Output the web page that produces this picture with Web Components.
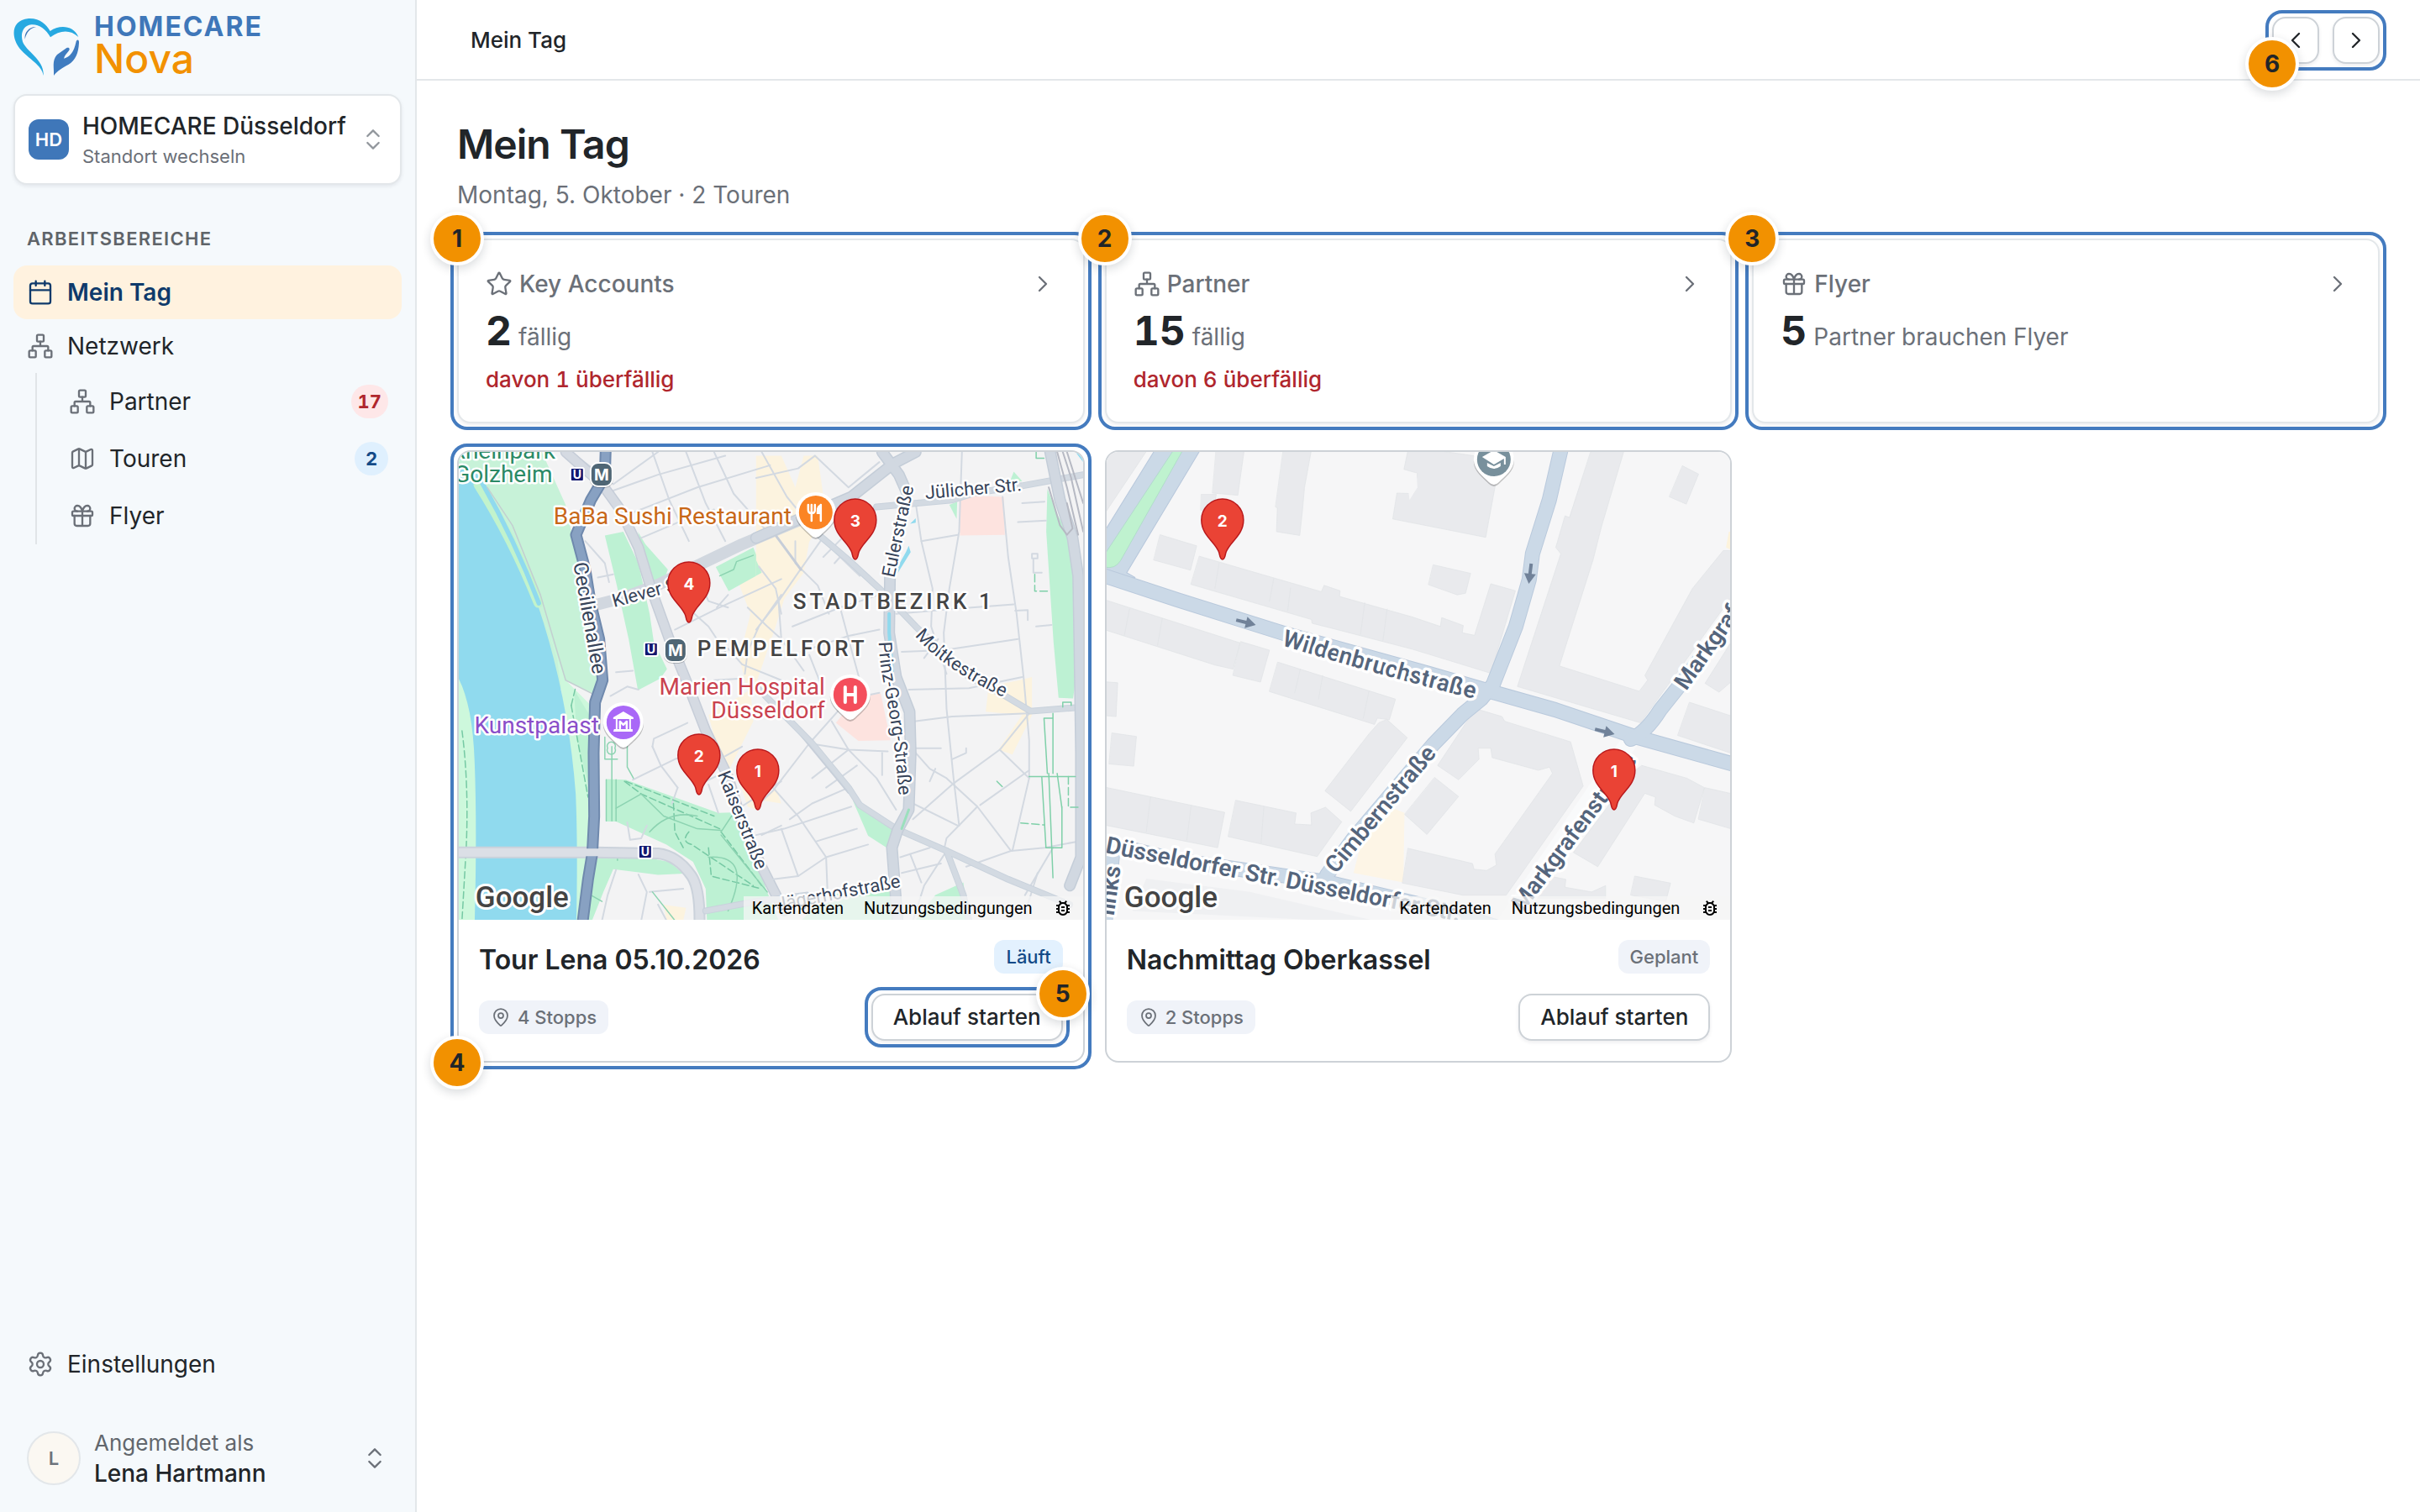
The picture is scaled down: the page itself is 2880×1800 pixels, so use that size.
<!DOCTYPE html>
<html lang="de">
<head>
<meta charset="utf-8">
<meta name="viewport" content="width=device-width, initial-scale=1">
<title>Mein Tag – HOMECARE Nova</title>
<style>
  :root {
    --ink: #212529;
    --muted: #6b7078;
    --line: #e3e7ea;
    --line-strong: #cdd2d7;
    --brand: #3f77b9;
    --ring: #447bbf;
    --accent: #f29100;
    --navy: #0f3a6b;
    --danger: #b0262d;
    --shadow: 0 2px 4px rgba(20, 30, 45, .08);
  }
  body { margin: 0; background: #fff; color: var(--ink); font: 400 28px/40px Inter, "Liberation Sans", sans-serif; }
</style>
</head>
<body>
<app-shell>
  <app-sidebar slot="sidebar">
    <location-switcher slot="top" initials="HD" name="HOMECARE Düsseldorf">Standort wechseln</location-switcher>
    <nav-item icon="calendar" active>Mein Tag</nav-item>
    <nav-item icon="network">Netzwerk</nav-item>
    <nav-group>
      <nav-item icon="network">Partner<count-badge slot="end" tone="red">17</count-badge></nav-item>
      <nav-item icon="map">Touren<count-badge slot="end" tone="blue">2</count-badge></nav-item>
      <nav-item icon="gift">Flyer</nav-item>
    </nav-group>
    <nav-item slot="bottom" icon="settings">Einstellungen</nav-item>
    <user-menu slot="bottom" initial="L" name="Lena Hartmann">Angemeldet als</user-menu>
  </app-sidebar>

  <top-bar slot="header" label="Mein Tag">
    <callout-ring number="6" corner="bottom-left"><day-pager></day-pager></callout-ring>
  </top-bar>

  <page-title heading="Mein Tag">Montag, 5. Oktober · 2 Touren</page-title>

  <card-grid>
    <callout-ring number="1"><stat-card icon="star" label="Key Accounts" value="2" unit="fällig">davon 1 überfällig</stat-card></callout-ring>
    <callout-ring number="2"><stat-card icon="network" label="Partner" value="15" unit="fällig">davon 6 überfällig</stat-card></callout-ring>
    <callout-ring number="3"><stat-card icon="gift" label="Flyer" value="5" unit="Partner brauchen Flyer"></stat-card></callout-ring>
  </card-grid>

  <card-grid>
    <callout-ring number="4" corner="bottom-left">
      <tour-card name="Tour Lena 05.10.2026" stops="4 Stopps">
        <pempelfort-map slot="map"></pempelfort-map>
        <state-chip slot="state" tone="blue">Läuft</state-chip>
        <callout-ring slot="action" number="5" corner="top-right"><plain-button>Ablauf starten</plain-button></callout-ring>
      </tour-card>
    </callout-ring>
    <tour-card name="Nachmittag Oberkassel" stops="2 Stopps">
      <oberkassel-map slot="map"></oberkassel-map>
      <state-chip slot="state">Geplant</state-chip>
      <plain-button slot="action">Ablauf starten</plain-button>
    </tour-card>
  </card-grid>
</app-shell>

<script>
const define = (name, render) => customElements.define(name, class extends HTMLElement {
  constructor() { super(); this.attachShadow({ mode: 'open' }); }
  connectedCallback() {
    const t = document.createElement('template');
    t.innerHTML = '<style>:host, * { box-sizing: border-box; }</style>' + render(a => this.getAttribute(a) || '', this);
    this.shadowRoot.replaceChildren(t.content.cloneNode(true));
  }
});

/* ---------- icons (24 unit grid) ---------- */
const ICONS = {
  calendar: '<path d="M8 2v4M16 2v4M3 10h18"/><rect x="3" y="4" width="18" height="18" rx="2"/>',
  network: '<rect x="16" y="16" width="6" height="6" rx="1"/><rect x="2" y="16" width="6" height="6" rx="1"/><rect x="9" y="2" width="6" height="6" rx="1"/><path d="M5 16v-3a1 1 0 0 1 1-1h12a1 1 0 0 1 1 1v3M12 12V8"/>',
  map: '<path d="M14.106 5.553a2 2 0 0 0 1.788 0l3.659-1.83A1 1 0 0 1 21 4.619v12.764a1 1 0 0 1-.553.894l-4.553 2.277a2 2 0 0 1-1.788 0l-4.212-2.106a2 2 0 0 0-1.788 0l-3.659 1.83A1 1 0 0 1 3 19.381V6.618a1 1 0 0 1 .553-.894l4.553-2.277a2 2 0 0 1 1.788 0zM15 5.764v15M9 3.236v15"/>',
  gift: '<rect x="3" y="8" width="18" height="4" rx="1"/><path d="M12 8v13M19 12v7a2 2 0 0 1-2 2H7a2 2 0 0 1-2-2v-7M7.5 8a2.5 2.5 0 0 1 0-5A4.8 8 0 0 1 12 8a4.8 8 0 0 1 4.5-5 2.5 2.5 0 0 1 0 5"/>',
  settings: '<path d="M9.671 4.136a2.34 2.34 0 0 1 4.659 0 2.34 2.34 0 0 0 3.319 1.915 2.34 2.34 0 0 1 2.33 4.033 2.34 2.34 0 0 0 0 3.831 2.34 2.34 0 0 1-2.33 4.033 2.34 2.34 0 0 0-3.319 1.915 2.34 2.34 0 0 1-4.659 0 2.34 2.34 0 0 0-3.32-1.915 2.34 2.34 0 0 1-2.33-4.033 2.34 2.34 0 0 0 0-3.831A2.34 2.34 0 0 1 6.35 6.051a2.34 2.34 0 0 0 3.319-1.915"/><circle cx="12" cy="12" r="3"/>',
  star: '<path d="M11.525 2.295a.53.53 0 0 1 .95 0l2.31 4.679a2.123 2.123 0 0 0 1.595 1.16l5.166.756a.53.53 0 0 1 .294.904l-3.736 3.638a2.123 2.123 0 0 0-.611 1.878l.882 5.14a.53.53 0 0 1-.771.56l-4.618-2.428a2.122 2.122 0 0 0-1.973 0L6.396 21.01a.53.53 0 0 1-.77-.56l.881-5.139a2.122 2.122 0 0 0-.611-1.879L2.16 9.795a.53.53 0 0 1 .294-.906l5.165-.755a2.122 2.122 0 0 0 1.597-1.16z"/>',
  right: '<path d="m9 18 6-6-6-6"/>',
  left: '<path d="m15 18-6-6 6-6"/>',
  updown: '<path d="m7 15 5 5 5-5M7 9l5-5 5 5"/>',
  pin: '<path d="M20 10c0 4.993-5.539 10.193-7.399 11.799a1 1 0 0 1-1.202 0C9.539 20.193 4 14.993 4 10a8 8 0 0 1 16 0"/><circle cx="12" cy="10" r="3"/>'
};
define('app-icon', a => `<style>
  :host { display: block; flex: none; width: var(--icon, 32px); height: var(--icon, 32px); }
  svg { display: block; width: 100%; height: 100%; fill: none; stroke: currentColor; stroke-width: var(--stroke, 1.75); stroke-linecap: round; stroke-linejoin: round; }
</style><svg viewBox="0 0 24 24" aria-hidden="true">${ICONS[a('name')]}</svg>`);

/* ---------- shell ---------- */
define('app-shell', () => `<style>
  :host { display: grid; grid-template-columns: 496px minmax(0, 1fr); min-height: 100vh; }
  .side { display: grid; background: #f5f9fc; border-right: 2px solid var(--line); }
  .body { display: flex; flex-direction: column; min-width: 0; }
  main { display: flex; flex-direction: column; gap: 32px; padding: 48px; }
</style>
<div class="side"><slot name="sidebar"></slot></div>
<div class="body"><slot name="header"></slot><main><slot></slot></main></div>`);

define('app-sidebar', () => `<style>
  :host { display: flex; flex-direction: column; padding: 16px 16px 28px; }
  .brand { display: flex; gap: 16px; height: 76px; margin-bottom: 20px; text-decoration: none; }
  .brand svg { width: 80px; height: 76px; flex: none; }
  .brand b { display: block; font-size: 32px; line-height: 32px; letter-spacing: 2px; color: var(--brand); font-weight: 700; }
  .brand i { display: block; font-size: 48px; line-height: 44px; font-style: normal; font-weight: 500; color: var(--accent); }
  h2 { margin: 48px 0 16px; padding: 0 16px; font-size: 22px; line-height: 32px; font-weight: 600; letter-spacing: .06em; color: #5f6469; }
  .foot { margin-top: auto; display: flex; flex-direction: column; gap: 44px; }
</style>
<a class="brand" href="#start">
  <svg viewBox="48 48 240 228" aria-hidden="true">
    <path fill="#27a9e1" d="M155 270C150 232 103 212 71 174C39 134 38 72 102 66C142 64 166 88 179 111C212 88 262 90 280 132C250 103 212 108 180 133C164 103 138 86 112 88C82 91 72 120 81 149C93 183 160 214 155 270Z"/>
    <path fill="#3f77b9" d="M89 140C86 116 104 95 129 96C108 100 94 116 89 140Z"/>
    <path fill="#3f7cc0" d="M192 270C194 243 184 217 204 195L237 172C246 167 252 175 245 182C238 191 230 198 228 209C250 203 264 184 271 152C273 139 283 140 282 153C280 190 270 215 245 230C222 243 206 251 192 270Z"/>
  </svg>
  <span><b>HOMECARE</b><i>Nova</i></span>
</a>
<slot name="top"></slot>
<nav><h2>ARBEITSBEREICHE</h2><slot></slot></nav>
<div class="foot"><slot name="bottom"></slot></div>`);

define('location-switcher', a => `<style>
  :host { display: block; }
  button { display: flex; align-items: center; gap: 16px; width: 100%; padding: 16px; border: 2px solid var(--line); border-radius: 16px; background: #fff; box-shadow: var(--shadow); font: inherit; color: var(--ink); text-align: left; }
  .tile { display: grid; place-items: center; width: 48px; height: 48px; border-radius: 12px; background: var(--brand); color: #fff; font-size: 22px; font-weight: 600; }
  .text { flex: 1; min-width: 0; white-space: nowrap; }
  strong { display: block; font-weight: 500; }
  small { display: block; font-size: 22px; line-height: 32px; color: var(--muted); }
  app-icon { color: #92979d; }
</style>
<button type="button"><span class="tile">${a('initials')}</span><span class="text"><strong>${a('name')}</strong><small><slot></slot></small></span><app-icon name="updown"></app-icon></button>`);

define('nav-item', (a, el) => `<style>
  :host { display: block; }
  a { display: flex; align-items: center; gap: 16px; height: var(--row, 64px); padding: 0 16px; border-radius: 16px; color: var(--ink); text-decoration: none; }
  app-icon { color: var(--muted); }
  span { flex: 1; }
  :host([active]) a { background: #fff2df; color: var(--navy); font-weight: 600; }
  :host([active]) app-icon { color: var(--navy); }
</style>
<a href="#" ${el.hasAttribute('active') ? 'aria-current="page"' : ''}><app-icon name="${a('icon')}"></app-icon><span><slot></slot></span><slot name="end"></slot></a>`);

define('nav-group', () => `<style>
  :host { display: block; --row: 68px; margin-left: 26px; padding-left: 22px; border-left: 2px solid #e1e5e8; }
</style><slot></slot>`);

define('count-badge', () => `<style>
  :host { display: grid; place-items: center; min-width: 40px; height: 40px; padding: 0 8px; border-radius: 20px; font-size: 22px; font-weight: 700; font-variant-numeric: tabular-nums; background: #dff0fe; color: #134a87; }
  :host([tone="red"]) { background: #fee7e8; color: var(--danger); }
</style><slot></slot>`);

define('user-menu', a => `<style>
  :host { display: block; }
  button { display: flex; align-items: center; gap: 16px; width: 100%; padding: 0 16px; border: 0; background: none; font: inherit; line-height: 36px; color: var(--ink); text-align: left; }
  .avatar { display: grid; place-items: center; width: 64px; height: 64px; border: 2px solid var(--line); border-radius: 50%; background: #fbf8f2; color: #6d747d; font-size: 22px; font-weight: 600; }
  .text { flex: 1; }
  small { display: block; font-size: 26px; color: #62676d; }
  strong { display: block; font-weight: 500; }
  app-icon { color: var(--muted); }
</style>
<button type="button"><span class="avatar">${a('initial')}</span><span class="text"><small><slot></slot></small><strong>${a('name')}</strong></span><app-icon name="updown"></app-icon></button>`);

define('top-bar', a => `<style>
  :host { display: flex; align-items: center; justify-content: space-between; height: 96px; padding: 2px 48px 0 64px; border-bottom: 2px solid var(--line); position: relative; z-index: 2; }
  span { font-size: 26px; font-weight: 500; }
</style><span>${a('label')}</span><slot></slot>`);

define('day-pager', () => `<style>
  :host { display: flex; gap: 16px; }
  button { display: grid; place-items: center; width: 56px; height: 56px; padding: 0; border: 2px solid var(--line-strong); border-radius: 16px; background: #fff; box-shadow: var(--shadow); color: var(--ink); }
</style>
<button type="button" aria-label="Vorheriger Tag"><app-icon name="left"></app-icon></button>
<button type="button" aria-label="Nächster Tag"><app-icon name="right"></app-icon></button>`);

/* numbered highlight drawn round whatever is slotted in */
define('callout-ring', a => `<style>
  :host { display: grid; position: relative; }
  .ring { position: absolute; inset: -8px; border: 4px solid var(--ring); border-radius: 20px; pointer-events: none; }
  .num { position: absolute; z-index: 1; top: 0; left: 0; translate: -50% -50%; display: grid; place-items: center; width: 64px; height: 64px; border: 4px solid #fff; border-radius: 50%; background: var(--accent); box-shadow: 0 4px 12px rgba(20, 30, 45, .16); font-size: 28px; font-weight: 700; color: var(--ink); }
  :host([corner="bottom-left"]) .num { top: 100%; }
  :host([corner="top-right"]) .num { left: 100%; }
</style><slot></slot><div class="ring"></div><div class="num">${a('number')}</div>`);

/* ---------- page ---------- */
define('page-title', a => `<style>
  :host { display: block; }
  h1 { margin: 0 0 12px; font-size: 48px; line-height: 56px; font-weight: 600; letter-spacing: -.02em; }
  p { margin: 0; color: var(--muted); }
</style><h1>${a('heading')}</h1><p><slot></slot></p>`);

define('card-grid', () => `<style>
  :host { display: grid; grid-template-columns: repeat(3, minmax(0, 1fr)); gap: 24px; }
</style><slot></slot>`);

define('stat-card', a => `<style>
  :host { display: grid; }
  a { display: block; min-height: 220px; padding: 32px; border: 2px solid var(--line); border-radius: 16px; background: #fff; box-shadow: var(--shadow); color: var(--muted); text-decoration: none; font-variant-numeric: tabular-nums; }
  .top { display: flex; align-items: center; gap: 8px; margin-bottom: 4px; font-weight: 500; }
  .top span { flex: 1; }
  .count { display: flex; align-items: baseline; gap: 8px; margin-bottom: 8px; }
  b { font-size: 48px; line-height: 64px; font-weight: 700; color: var(--ink); }
  .late { font-size: 26px; line-height: 36px; font-weight: 500; color: var(--danger); }
</style>
<a href="#"><div class="top"><app-icon name="${a('icon')}"></app-icon><span>${a('label')}</span><app-icon name="right"></app-icon></div>
<div class="count"><b>${a('value')}</b><span>${a('unit')}</span></div><div class="late"><slot></slot></div></a>`);

define('plain-button', () => `<style>
  :host { display: block; }
  button { display: block; height: 56px; padding: 0 24px; border: 2px solid var(--line-strong); border-radius: 16px; background: #fff; box-shadow: var(--shadow); font: inherit; font-size: 26px; font-weight: 500; color: var(--ink); white-space: nowrap; }
</style><button type="button"><slot></slot></button>`);

define('state-chip', () => `<style>
  :host { display: flex; align-items: center; gap: 8px; height: 40px; padding: 0 14px; border-radius: 12px; font-size: 22px; font-weight: 500; background: #f0f3f9; color: var(--muted); --icon: 24px; white-space: nowrap; }
  :host([tone="blue"]) { background: #e3f1fe; color: #134a87; }
</style><slot></slot>`);

define('tour-card', a => `<style>
  :host { display: block; border: 2px solid var(--line-strong); border-radius: 16px; background: #fff; }
  .map { position: relative; overflow: hidden; border-radius: 14px 14px 0 0; }
  .body { display: flex; flex-direction: column; gap: 16px; padding: 24px; }
  .row { display: flex; justify-content: space-between; align-items: center; }
  .head { align-items: flex-start; }
  h3 { margin: 0; font-size: 32px; line-height: 48px; font-weight: 600; }
</style>
<div class="map"><slot name="map"></slot></div>
<div class="body">
  <div class="row head"><h3>${a('name')}</h3><slot name="state"></slot></div>
  <div class="row"><state-chip><app-icon name="pin"></app-icon>${a('stops')}</state-chip><slot name="action"></slot></div>
</div>`);

/* ---------- maps ---------- */
define('map-frame', () => `<style>
  :host { display: block; position: relative; aspect-ratio: 4 / 3; overflow: hidden; }
  .bar { position: absolute; right: 0; bottom: 0; display: flex; align-items: center; height: 28px; padding: 0 12px 0 10px; gap: 24px; background: rgba(245, 245, 245, .75); font: 400 20px/28px Roboto, sans-serif; color: #000; }
  button, a { padding: 0; border: 0; background: none; font: inherit; color: #000; text-decoration: none; }
  svg { display: block; width: 24px; height: 24px; }
</style>
<slot></slot>
<div class="bar"><button type="button">Kartendaten</button><a href="#">Nutzungsbedingungen</a><a href="#" aria-label="Fehler melden"><svg viewBox="0 0 24 24"><path d="M20 8h-2.81c-.45-.78-1.07-1.45-1.82-1.96L17 4.41 15.59 3l-2.17 2.17C12.96 5.06 12.49 5 12 5s-.96.06-1.41.17L8.41 3 7 4.41l1.62 1.63C7.88 6.55 7.26 7.22 6.81 8H4v2h2.09c-.05.33-.09.66-.09 1v1H4v2h2v1c0 .34.04.67.09 1H4v2h2.81c1.04 1.79 2.97 3 5.19 3s4.15-1.21 5.19-3H20v-2h-2.09c.05-.33.09-.66.09-1v-1h2v-2h-2v-1c0-.34-.04-.67-.09-1H20V8zm-4 4v3c0 .22-.03.47-.07.7l-.1.65-.37.65c-.72 1.24-2.04 2-3.46 2s-2.74-.77-3.46-2l-.37-.64-.1-.65C8.03 15.48 8 15.23 8 15v-4c0-.23.03-.48.07-.7l.1-.65.37-.65c.3-.52.72-.97 1.21-1.31l.57-.39.74-.18c.31-.08.63-.12.94-.12.32 0 .63.04.95.12l.68.16.61.42c.5.34.91.78 1.21 1.31l.38.65.1.65c.04.22.07.47.07.69v1zm-6 2h4v2h-4zm0-4h4v2h-4z"/></svg></a></div>`);

const MAP_CSS = `<style>
  :host { display: block; }
  svg { display: block; width: 100%; height: 100%; }
  text { font-family: Roboto, sans-serif; paint-order: stroke; stroke: #fff; stroke-width: 5px; stroke-linejoin: round; }
  .st { font-size: 22px; fill: #37445a; }
  .wide { font-size: 24px; }
  .big { font-size: 28px; font-weight: 600; fill: #55657c; stroke-width: 7px; }
  .poi { font-size: 28px; }
  .area { font-size: 26px; font-weight: 500; letter-spacing: 4px; fill: #444; }
  .pin text { font: 700 19px Inter, sans-serif; fill: #fff; stroke: none; text-anchor: middle; }
  .g { font-size: 35px; font-weight: 500; fill: #444; stroke-width: 6px; }
  .mk { font-family: Inter, sans-serif; font-weight: 700; fill: #fff; stroke: none; text-anchor: middle; }
  path, polygon { stroke-linejoin: round; stroke-linecap: round; }
  .ln path { fill: none; vector-effect: non-scaling-stroke; }
</style>`;
const pin = (x, y, n) => `<g class="pin" transform="translate(${x} ${y})"><path fill="#ea4335" stroke="#b9191c" stroke-width="1.5" d="M0 0C-3 0-3-4-4-8C-8-21-25-28-25-47A25 25 0 0 1 25-47C25-28 8-21 4-8C3-4 3 0 0 0Z"/><text y="-39">${n}</text></g>`;
const poi = (x, y, color, glyph) => `<g transform="translate(${x} ${y})"><path fill="#000" opacity=".22" d="M-24 3A24 24 0 1 1 24 3C24 14 13 22 6 29Q0 35-6 29C-13 22-24 14-24 3Z"/><path fill="#fff" d="M-24 0A24 24 0 1 1 24 0C24 12 13 20 6 27Q0 33-6 27C-13 20-24 12-24 0Z"/><circle r="20" fill="${color}"/>${glyph}</g>`;
const ubahn = (x, y) => `<rect x="${x}" y="${y}" width="16" height="16" rx="2" fill="#12186f" stroke="#fff" stroke-width="2"/><text class="mk" x="${x + 8}" y="${y + 13}" font-size="14">U</text>`;
const metro = (x, y) => `<rect x="${x - 14}" y="${y - 14}" width="28" height="30" rx="10" fill="#000" opacity=".2"/><rect x="${x - 13}" y="${y - 14}" width="26" height="28" rx="9" fill="#4f6675" stroke="#fff" stroke-width="2"/><text class="mk" x="${x}" y="${y + 7}" font-size="19">M</text>`;
const poly = (list, attrs = '') => list.map(p => `<polygon points="${p}" ${attrs}/>`).join('');
const lines = (list, color, width, extra = '') => list.map(d => `<path d="${d}" stroke="${color}" stroke-width="${width}" ${extra}/>`).join('');

define('pempelfort-map', () => {
  const L = 'translate(530 520) scale(.3333 .3763)', R = 'translate(900 520) scale(.3333 .3763)';
  const minorL = ['M600 170L760 120L1000 60', 'M640 250L900 160L1160 90', 'M700 320L860 260L960 230', 'M740 48L800 200L870 330', 'M860 48L930 210L1000 330', 'M960 48L1030 180L1150 300',
    'M820 610L980 540L1200 450', 'M970 540L1010 500', 'M890 560L940 600L1000 680', 'M900 440L940 520L1010 540', 'M1120 410L1180 480L1200 560', 'M1200 500L1120 600L1080 680L1070 750', 'M1010 670L1060 720L1200 770',
    'M545 445L600 435', 'M610 745L670 740', 'M500 330L570 400L585 460', 'M590 820L650 790L690 800', 'M740 980L745 955L865 905', 'M740 980L770 1040L830 1110', 'M670 1085L820 1020L940 985', 'M940 1100L975 1190', 'M930 1090L1000 1060', 'M1040 1180L1200 1090',
    'M1080 540L1150 600L1200 640', 'M960 770L1060 765', 'M650 1220L660 1275L700 1270L720 1230', 'M610 1370L580 1450L560 1530', 'M690 1385L720 1440L700 1530', 'M730 1440L850 1430', 'M760 1480L790 1530', 'M1130 1260L1200 1230', 'M1000 1010L1060 980', 'M450 48L600 150L760 48', 'M830 1110L810 1160'];
  const minorR = ['M20 48L110 190L230 320L370 440', 'M210 60L330 160L440 80', 'M0 130L150 100L210 60', 'M230 330L150 430L80 520L0 610', 'M140 330L140 400L220 470L260 560', 'M280 400L310 370', 'M80 520L90 640L170 740',
    'M130 600L300 540L440 500', 'M160 680L330 630L440 610', 'M300 540L330 640L370 770', 'M190 690L230 780', 'M240 380L330 300L440 220', 'M570 210L590 330L630 480L625 600L680 750', 'M590 330L720 310', 'M735 48L725 300L690 480L670 620L680 860L705 1080L725 1230',
    'M880 190L900 380L930 560L955 760L975 960L975 1080L915 1310', 'M520 680L670 675L935 640', 'M545 800L760 795L950 760', 'M565 900L700 885L970 875', 'M500 560L700 545L920 530', 'M950 210L1030 205', 'M935 270L1035 265', 'M925 550L970 548L970 580', 'M1000 600L1055 595',
    'M560 985L660 985', 'M570 1000L620 1050L680 1080L790 1170L910 1310', 'M980 870L870 990L700 1100L560 1210', 'M870 990L975 1080', 'M800 1165L975 1055', 'M790 1170L680 1270L670 1310', 'M910 1310L1030 1300L1150 1280', 'M910 1310L750 1360', 'M720 1230L560 1160', 'M640 1050L620 1090',
    'M190 970L330 990L470 995', 'M190 970L60 1120L0 1170', 'M330 1110L200 1160L120 1210', 'M60 1110L150 1200L250 1330L255 1440', 'M0 1260L100 1240L340 1170', 'M215 1280L360 1240', 'M90 1240L150 1390L60 1400', 'M150 1390L250 1330L400 1290', 'M330 990L430 1080L500 1180', 'M190 970L330 830L440 810',
    'M270 900L330 990L200 1080', 'M450 1000L450 1070', 'M250 1110L360 1040', 'M515 1330L620 1300', 'M550 1320L590 1410', 'M520 1380L660 1350', 'M680 1310L600 1420L560 1530', 'M1005 1380L970 1480', 'M1060 1300L960 1450', 'M700 1020L750 1000L750 985', 'M600 700L650 640', 'M985 370H1005V385H985ZM990 385V430H1020'];
  const mid = 'M430 48L560 150L625 230L690 350L735 480L800 640L860 770L930 930L1010 1075L1060 1220L1130 1360L1210 1500';
  const bridge = 'M0 1315H530L760 1318Q830 1325 880 1390Q910 1430 908 1540';
  const allee = 'M573 40L570 125L520 200L467 310L500 420L520 530L550 640L562 770L535 840L530 1000L532 1200L525 1320L510 1400L490 1540';
  const mainR = ['M0 320L160 258L340 190L490 85L570 48', 'M450 48L510 120L540 180', 'M478 440L475 620L500 760L548 870L552 1000L545 1180L505 1245L485 1300L505 1530', 'M1050 48L1085 200L1130 320L1150 440L1155 700L1160 1000L1160 1330L1120 1420'];
  const sideR = ['M430 222L600 208L700 200L780 178L950 155L1168 120', 'M170 270L330 390L440 480L570 600L760 760L890 820L980 868L1168 855', 'M0 790L100 880L200 970L330 1110L370 1165L500 1240L680 1310L900 1400L1120 1480', 'M680 1310L740 1450L760 1530', 'M-180 1500L0 1470L180 1450'];
  return `${MAP_CSS}<map-frame><svg viewBox="546 538 743 557" preserveAspectRatio="xMidYMid slice" role="img" aria-label="Karte Pempelfort">
  <rect x="540" y="530" width="760" height="570" fill="#f3f3f4"/>
  <g transform="${L}">
    ${poly(['1020 400,1200 330,1280 60,1330 60,1360 250,1250 400,1180 600,1110 780,1080 800,1050 700,1090 560', '940 880,1090 800,1100 900,1010 1060,970 980', '1050 1090,1120 1080,1110 1180,1080 1170', '1130 1150,1200 1160,1180 1110', '780 1480,860 1490,850 1530,790 1530'], 'fill="#fcf3df"')}
    ${poly(['48 48,345 48,430 215,455 320,495 400,520 600,550 760,535 815,430 770,400 820,520 900,512 1300,480 1540,0 1540,0 48'], 'fill="#c7f2d8"')}
    ${poly(['48 750,48 1540,120 1540,115 1050,98 900', '340 540,430 770,520 850,512 1300,480 1540,440 1540,470 1200,400 700'], 'fill="#cdf8dc"')}
    <path fill="#90daee" d="M0 70L60 90L120 160Q260 330 330 530Q440 820 466 1130Q474 1300 468 1540H105Q114 1240 105 1030Q98 850 48 765H0Z"/>
    <path fill="none" stroke="#c2f3cc" stroke-width="34" d="M118 150Q240 320 332 524"/>
    <path fill="none" stroke="#90daee" stroke-width="16" d="M66 92L128 140Q250 330 334 526"/>
    ${poly(['570 312,636 300,690 400,730 560,745 650,792 735,768 765,688 802,655 640,610 460', '688 300,715 340,795 420,775 470,738 480', '966 412,1100 350,1135 428,1012 488', '575 1083,645 1085,975 1190,1045 1188,1100 1330,1195 1540,935 1540,930 1430,885 1345,790 1290,610 1217,575 1217', '545 1330,700 1328,800 1345,850 1382,760 1386,600 1368,565 1440,520 1540,480 1540', '460 800,515 880,512 1100,470 960'], 'fill="#bdf1d3"')}
  </g>
  <g transform="${R}">
    ${poly(['0 60,90 60,200 280,170 430,60 560,0 620', '940 770,985 760,985 880,915 1005,865 990,950 880,820 870,830 790'], 'fill="#fcf3df"')}
    ${poly(['725 185,885 190,888 310,728 312', '285 905,360 822,445 812,480 960,365 962'], 'fill="#fde3df"')}
    ${poly(['1040 165,1078 250,1140 340,1165 480,1150 700,1132 828,1080 826,1062 650,1036 300', '345 1150,495 1240,470 1302,400 1262', '640 1450,740 1410,760 1540,560 1540', '0 390,20 430,0 440', '250 1450,480 1425,490 1540,150 1540', '690 215,718 205,716 260', '920 110,950 140,905 145', '0 1365,30 1400,45 1540,0 1540'], 'fill="#bdf1d3"')}
    ${poly(['545 345,552 365,505 432,500 420,535 365', '570 258,570 272,550 275', '1140 48,1168 48,1168 80'], 'fill="#90daee"')}
  </g>
  <g class="ln" transform="${L}">${lines(minorL, '#d3d9e1', 2)}
    ${lines(['M640 1090L700 1130L980 1240', 'M645 1090L960 1200', 'M815 1160L820 1250L850 1300', 'M870 1250Q840 1280 880 1290L1100 1420', 'M985 1250L1130 1420', 'M940 1300L950 1390L1130 1430', 'M60 930Q85 1100 75 1300L60 1530', 'M450 850L510 1140', 'M450 850L465 795'], '#76c9a4', 1.5, 'stroke-dasharray="8 4"')}
    ${lines(['M595 980V1215M575 1085V1215M610 1085V1215M570 950V1020H615', 'M650 980V1045L672 1080', 'M580 985A15 13 0 1 0 606 985A15 13 0 1 0 580 985', 'M610 1175L700 1130L780 1200L900 1240L985 1245', 'M730 1250Q800 1180 900 1200', 'M985 1250L1030 1190M985 1260L1150 1440', 'M940 1330Q1100 1320 1010 1500', 'M980 440L1030 420L1040 395L1100 375', 'M615 1330V1340M520 1450L560 1470', 'M740 1440L820 1530'], '#8cd3b1', 1.5)}
    ${lines(['M150 160L240 280L340 500L430 770L530 815'], '#c3cfd0', 1.5)}
    ${lines(['M545 530L640 508L760 468L930 395L1060 340L1280 258'], '#d1d7df', 14)}
    ${lines([mid], '#c6cdd8', 13)}${lines([mid], '#d5dae2', 10)}
    ${lines([bridge], '#cbd2db', 14)}${lines([bridge], '#dbdfe6', 10)}
    ${lines([allee], '#6f89ad', 14)}${lines([allee], '#88a1c2', 10)}
    ${lines(['M0 1315H560'], '#dbdfe6', 9)}
  </g>
  <g class="ln" transform="${R}">${lines(minorR, '#d3d9e1', 2)}
    ${lines(['M120 900L330 1125', 'M160 420L60 300'], '#c6cdd8', 3)}
    ${lines(sideR, '#c9d2dc', 8)}${lines(sideR, '#d3dae2', 6)}
    ${lines(mainR, '#c4cdd8', 14)}${lines(mainR, '#d1d8e1', 11)}
    ${lines(['M475 560V620L488 760'], '#90daee', 4)}${lines(['M520 1240L545 1180'], '#9be0bd', 3)}
    ${lines(['M1075 48L1110 160L1150 310', 'M1095 48L1125 130L1168 300', 'M1110 48L1168 210', 'M1045 160L1085 280L1110 310L1130 290L1110 210'], '#b6b9c3', 2)}
    ${lines(['M1060 875V1065M1030 890H1060M1028 890L1040 1065M975 1075H1140M1020 1075L1035 1300H1092V1170M1045 1065L1060 1395M1075 1065L1092 1175', 'M1000 48V68H1028', 'M1095 855V840H1125V850'], '#7fd0a9', 1.5)}
    ${lines(['M995 435V488H1052', 'M1115 1075V1172H1150', 'M945 1222L1030 1228', 'M860 1090L880 1108'], '#7fd0a9', 1.5, 'stroke-dasharray="9 4"')}
  </g>
  <g text-anchor="middle">
    <text class="poi" fill="#2b8a66" x="599" y="546">Rheinpark</text><text class="poi" fill="#2b8a66" x="599" y="574">Golzheim</text>
    <text class="st wide" transform="translate(694 737) rotate(80)">Cecilienallee</text>
    <text class="st" text-anchor="start" transform="translate(731 723) rotate(-15)">Klever Str.</text>
    <text class="st" transform="translate(877 979) rotate(68)">Kaiserstraße</text>
    <text class="st" transform="translate(1076 634) rotate(-78)">Eulerstraße</text>
    <text class="st" transform="translate(1159 589) rotate(-5)">Jülicher Str.</text>
    <text class="st" transform="translate(999 1070) rotate(-11)">Jägerhofstraße</text>
  </g>
  <path id="molt" fill="none" d="M1089 757Q1130 806 1240 850"/><path id="prinz" fill="none" d="M1046 764C1047 815 1065 845 1071 970"/>
  <text class="st"><textPath href="#molt">Moltkestraße</textPath></text>
  <text class="st"><textPath href="#prinz">Prinz-Georg-Straße</textPath></text>
  <text class="area" x="944" y="725">STADTBEZIRK 1</text><text class="area" x="830" y="781">PEMPELFORT</text>
  <g text-anchor="end"><text class="poi" fill="#c86717" x="942" y="624">BaBa Sushi Restaurant</text>
  <text class="poi" fill="#ca4350" x="982" y="827">Marien Hospital</text><text class="poi" fill="#ca4350" x="982" y="855">Düsseldorf</text>
  <text class="poi" fill="#8a4ec9" x="713" y="873">Kunstpalast</text></g>
  ${ubahn(679, 557)}${metro(716, 565)}${ubahn(767, 765)}${metro(804, 774)}${ubahn(760, 1006)}
  ${poi(971, 610, '#fb8424', '<g fill="none" stroke="#fff" stroke-width="2.5" stroke-linecap="round"><path d="M-9-9V-3Q-9 1-5 1Q-1 1-1-3V-9M-5-9V10M6 10V-9"/></g><path fill="#fff" d="M7-10Q1-9 1-2V2H7Z"/>')}
  ${poi(742, 860, '#a968f7', '<path fill="#fff" d="M-12-6L0-13L12-6V-4H-12ZM-11 8H11V11H-12ZM-9-4H-7V9H-9ZM7-4H9V9H7Z"/><path fill="none" stroke="#fff" stroke-width="2.5" d="M-4 7V-1L0 3L4-1V7"/>')}
  ${poi(1012, 827, '#f44e5c', '<path fill="none" stroke="#fff" stroke-width="4" d="M-6-9V9M6-9V9M-6 0H6"/>')}
  ${pin(820, 741, 4)}${pin(1018, 666, 3)}${pin(832, 946, 2)}${pin(902, 964, 1)}
  <text class="g" x="566" y="1080">Google</text>
  </svg></map-frame>`;
});

define('oberkassel-map', () => {
  const L = 'translate(1300 520) scale(.3333 .3763)', R = 'translate(1680 520) scale(.3333 .3763)';
  const roads = ['M1312 685L1400 714L1527 754L1700 802L1772 823L1850 845L1945 877L2070 912', 'M1858 530L1843 595L1823 659L1819 690L1803 746L1776 815L1762 832L1740 850L1705 886L1610 998L1578 1042', 'M1940 880Q1958 872 1975 845L2006 806L2070 722', 'M1300 1000L1400 1024L1578 1050L1720 1084L1800 1110', 'M1942 878L1925 902L1790 1100', 'M1324 1010L1314 1100'];
  const arrow = (x, y, r) => `<path fill="#718299" transform="translate(${x} ${y}) rotate(${r})" d="M-12-2H0V-7L12 0L0 7V2H-12Z"/>`;
  const b = 'fill="#e9eaed" stroke="#e0e2e6" stroke-width="2"';
  return `${MAP_CSS}<map-frame><svg viewBox="1316 538 743 557" preserveAspectRatio="xMidYMid slice" role="img" aria-label="Karte Oberkassel">
  <rect x="1310" y="530" width="760" height="570" fill="#f6f6f7"/>
  <g transform="${L}">
    ${poly(['1045 1165,1112 1190,1108 1410,930 1380,950 1310'], 'fill="#fdf5e6"')}
    ${poly(['40 40,195 40,40 245', '440 40,540 40,517 185,427 178', '387 182,440 182,430 230,385 232', '680 40,780 40,755 160,748 230,738 312,655 300,658 225,652 222', '1125 40,1110 103,1158 115,1145 180,1085 178,1070 260,1402 318,1437 150,1360 60,1200 40', '240 310,370 345,348 422,217 390',
      '380 378,640 445,815 490,825 470,882 487,880 505,1140 570,1240 600,1245 572,1322 597,1318 620,1362 628,1420 465,1508 487,1420 748,1140 672,850 605,782 590,780 578,350 467',
      '40 515,525 652,500 735,435 722,40 610', '528 648,630 675,598 776,500 755', '660 713,1080 830,1058 895,1015 890,1005 910,630 806', '1050 895,1122 952,920 1185,828 1120,985 940,1020 905', '40 775,88 778,82 885,40 882', '68 937,155 948,145 1042,58 1035', '40 1108,470 1188,445 1300,40 1228', '510 1150,725 1190,720 1225,780 1228,778 1190,830 1172,888 1218,800 1328,483 1265', '1220 1078,1305 1138,1192 1258,1113 1195'], b)}
    ${poly(['190 1398,560 1440,1050 1540,140 1500'], 'fill="#eff0f2"')}
    <g fill="none" stroke="#e0e2e6" stroke-width="2"><path d="M645 450L630 520M705 478L695 550M130 545L112 628M247 575L230 660M450 400L435 480M740 735L720 810M820 755L805 830M985 805L965 890M205 1140L190 1250M350 1166L335 1275M610 1170L600 1285M970 525L955 625M1050 545L1035 645"/></g>
    <polygon points="222 40,384 40,120 430,150 445,48 465,30 450,30 315" fill="#cbd9e7" stroke="#b8c8dc" stroke-width="3"/>
    <path fill="#bff2cf" stroke="#a9d9c4" stroke-width="2" d="M290 40H322L98 392Q78 420 40 412V375Z"/>
  </g>
  <g transform="${R}">
    ${poly(['-15 1302,215 1350,220 1368,265 1372,300 1355,295 1320,500 1065,490 1045,450 1055,285 1015,280 985,235 985,238 1020,165 1085,90 1040,225 860,320 885,330 900,565 965,610 1105,335 1450,180 1450,-35 1412',
      '640 40,757 40,675 285,645 390,525 725,810 805,840 770,830 755,1000 480,1110 360,1145 360,1145 500,815 905,375 790,530 370,512 350,545 250,560 255', '965 92,1022 118,978 213,918 190', '990 840,1145 885,1145 1003,948 945', '1145 640,1045 780,1095 808,1145 770',
      '820 1040,980 1080,1043 1110,1005 1222,937 1200,865 1165,868 1140,830 1128,662 1360,575 1315,790 1060', '1045 1110,1145 1130,1145 1242,1022 1210', '75 405,208 432,190 495,160 500,58 468', '795 1390,922 1412,905 1470,780 1450', '490 1390,548 1400,545 1425,640 1440,690 1420,690 1460,440 1460'], b)}
    ${poly(['1130 300,1145 300,1145 360,1120 350'], 'fill="#fdf3dc"')}
    <polygon points="-20 130,15 115,18 160,-10 200" fill="#f6f6f7"/>
  </g>
  <g class="ln">${lines(roads.slice(4, 5), '#f9fafb', 20)}${lines([...roads.slice(0, 4), roads[5]], '#b9c9dc', 18)}${lines([...roads.slice(0, 4), roads[5]], '#cbd9e7', 16)}</g>
  ${arrow(1482, 741, 14)}${arrow(1820, 683, 97)}${arrow(1909, 871, 14)}
  <path id="wild" fill="none" d="M1524 768Q1640 804 1770 836"/>
  <text class="big"><textPath href="#wild">Wildenbruchstraße</textPath></text>
  <text class="big" transform="translate(1589 1041) rotate(-50)">Cimbernstraße</text>
  <text class="big" transform="translate(1314 1015) rotate(11)">Düsseldorfer Str. Düsseldorfer Str.</text>
  <text class="big" transform="translate(1812 1086) rotate(-53)">Markgrafenstraße</text>
  <text class="big" transform="translate(2006 823) rotate(-55)">Markgrafenstraße</text>
  <text class="big" text-anchor="end" transform="translate(1333 1032) rotate(-82)">links</text>
  ${poi(1777, 547, '#78909c', '<path fill="#fff" d="M-14-3L0-11L14-3V6H12V-1L0 6ZM-8 4L0 8L8 4V8Q0 14-8 8Z"/>')}
  ${pin(1454, 666, 2)}${pin(1920, 964, 1)}
  <text class="g" x="1337" y="1080">Google</text>
  </svg></map-frame>`;
});
</script>
</body>
</html>
